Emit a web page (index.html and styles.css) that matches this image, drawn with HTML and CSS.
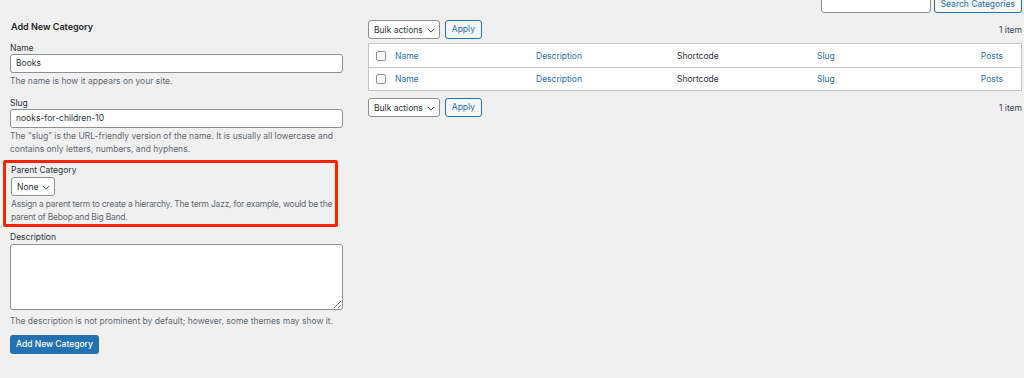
FILE: index.html
```html
<!DOCTYPE html>
<html>
<head>
<meta charset="utf-8">
<link rel="stylesheet" href="styles.css">
</head>
<body>
<div class="wrap">
  <div class="left">
    <h2 class="title">Add New Category</h2>
    <div class="field">
      <div class="label">Name</div>
      <div class="input">Books</div>
      <p class="help">The name is how it appears on your site.</p>
    </div>
    <div class="field last">
      <div class="label">Slug</div>
      <div class="input">nooks-for-children-10</div>
      <p class="help">The “slug” is the URL-friendly version of the name. It is usually all lowercase and contains only letters, numbers, and hyphens.</p>
    </div>
    <div class="highlight">
      <div class="label">Parent Category</div>
      <div class="select parent">None <svg class="chev" viewBox="0 0 10 6" width="8" height="5"><path d="M1 1l4 4 4-4" fill="none" stroke="#3c434a" stroke-width="1.2"/></svg></div>
      <p class="help">Assign a parent term to create a hierarchy. The term Jazz, for example, would be the parent of Bebop and Big Band.</p>
    </div>
    <div class="desc">
      <div class="label">Description</div>
      <textarea class="textarea"></textarea>
      <p class="help">The description is not prominent by default; however, some themes may show it.</p>
    </div>
    <div class="primary">Add New Category</div>
  </div>
  <div class="right">
    <div class="search">
      <div class="sinput"></div>
      <div class="btn">Search Categories</div>
    </div>
    <div class="nav">
      <div class="select">Bulk actions <svg class="chev" viewBox="0 0 10 6" width="8" height="5"><path d="M1 1l4 4 4-4" fill="none" stroke="#3c434a" stroke-width="1.2"/></svg></div>
      <div class="btn">Apply</div>
      <div class="count">1 item</div>
    </div>
    <div class="table">
      <div class="row">
        <span class="cb"></span>
        <span class="link">Name</span>
        <span class="link">Description</span>
        <span class="plain">Shortcode</span>
        <span class="link">Slug</span>
        <span class="link posts">Posts</span>
      </div>
      <div class="row">
        <span class="cb"></span>
        <span class="link">Name</span>
        <span class="link">Description</span>
        <span class="plain">Shortcode</span>
        <span class="link">Slug</span>
        <span class="link posts">Posts</span>
      </div>
    </div>
    <div class="nav bottom">
      <div class="select">Bulk actions <svg class="chev" viewBox="0 0 10 6" width="8" height="5"><path d="M1 1l4 4 4-4" fill="none" stroke="#3c434a" stroke-width="1.2"/></svg></div>
      <div class="btn">Apply</div>
      <div class="count">1 item</div>
    </div>
  </div>
</div>
</body>
</html>
```

FILE: styles.css
```css
* { box-sizing: border-box; }
html, body { margin: 0; padding: 0; }
body {
  background: #f0f0f1;
  font-family: Inter, Roboto, "Noto Sans", "Liberation Sans", sans-serif;
  font-size: 8.5px;
  color: #3c434a;
  overflow: hidden;
  height: 378px;
}
.wrap {
  display: flex;
  gap: 25px;
  padding: 0 2px 0 10px;
}
.left {
  width: 333px;
  flex: none;
  padding-top: 20px;
}
.title {
  margin: 0 0 8px 1px;
  font-size: 9px;
  font-weight: 600;
  color: #1d2327;
  line-height: 14px;
}
.label {
  line-height: 12px;
  color: #2c3338;
}
.field { margin-bottom: 9.5px; }
.field.last { margin-bottom: 5px; }
.input {
  height: 19px;
  background: #fff;
  border: 1px solid #8c8f94;
  border-radius: 3px;
  padding: 0 5px;
  line-height: 17px;
  color: #2c3338;
}
.help {
  margin: 2px 0 0 0;
  line-height: 12.5px;
  color: #646970;
}
.highlight {
  margin: 0 5px 0 -7px;
  padding: 1px 0 1px 5px;
  border: 3px solid #ff2200;
  border-radius: 2px;
}
.highlight .help { margin-right: -3px; letter-spacing: -0.22px; }
.select {
  display: inline-flex;
  align-items: center;
  gap: 4px;
  height: 19px;
  background: #fff;
  border: 1px solid #8c8f94;
  border-radius: 3px;
  padding: 0 4px 0 5px;
  color: #2c3338;
  white-space: nowrap;
}
.select.parent { margin-top: 1px; }
.chev { display: block; flex: none; margin-top: 1px; }
.desc { margin-top: 4px; }
.textarea {
  display: block;
  width: 100%;
  height: 66px;
  background: #fff;
  border: 1px solid #8c8f94;
  border-radius: 3px;
  margin: 1px 0 0 0;
  font: inherit;
}
.desc .help { margin-top: 5px; }
.primary {
  display: inline-block;
  margin-top: 7.5px;
  background: #2271b1;
  color: #fff;
  border-radius: 3px;
  height: 19px;
  line-height: 19px;
  padding: 0 6px;
  font-weight: 500;
}
.right {
  flex: 1;
  min-width: 0;
}
.search {
  display: flex;
  justify-content: flex-end;
  gap: 3px;
  margin-top: -5px;
  height: 18px;
}
.sinput {
  width: 110px;
  height: 18px;
  background: #fff;
  border: 1px solid #8c8f94;
  border-radius: 3px;
}
.search .btn { height: 18px; line-height: 16px; }
.btn {
  height: 19px;
  line-height: 17px;
  border: 1px solid #2271b1;
  border-radius: 3px;
  background: #f6f7f7;
  color: #2271b1;
  padding: 0 6px;
}
.nav {
  display: flex;
  align-items: center;
  gap: 5px;
  margin-top: 7px;
  height: 19px;
}
.nav .count { margin-left: auto; }
.table {
  margin-top: 4px;
  background: #fff;
  border: 1px solid #c3c4c7;
}
.row {
  display: grid;
  grid-template-columns: 19px 141px 141px 140px 1fr auto;
  align-items: center;
  height: 23px;
  padding-left: 7px;
}
.row + .row { border-top: 1px solid #c3c4c7; }
.cb {
  width: 10px;
  height: 10px;
  border: 1px solid #8c8f94;
  border-radius: 2px;
  background: #fff;
}
.link { color: #2271b1; }
.plain { color: #2c3338; }
.posts { padding-right: 18px; }
```
